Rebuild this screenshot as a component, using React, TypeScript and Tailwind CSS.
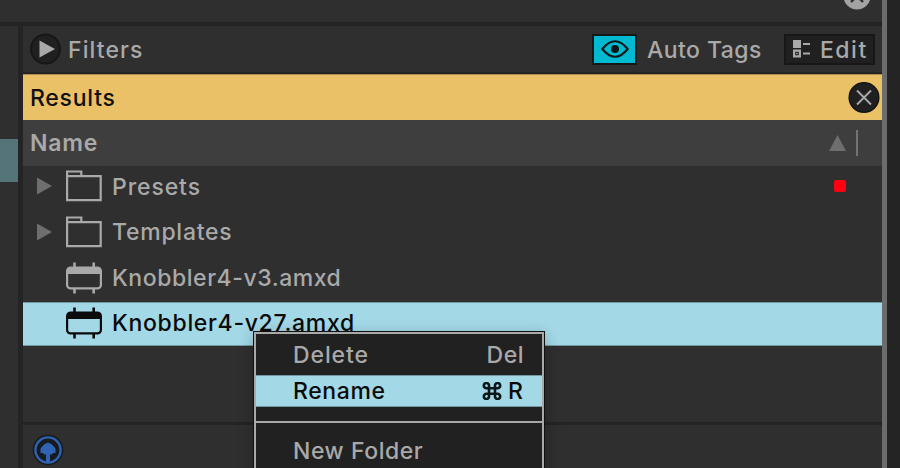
import React from "react";

const FOLDER = "#a9a9a9";

function FolderIcon() {
  return (
    <svg width="38" height="32" viewBox="0 0 38 32" fill="none" stroke={FOLDER} strokeWidth="2.2">
      <path d="M2.1 6.2H35.7V30.2H2.1Z" />
      <path d="M2.1 6V1.5H16.3V6" />
    </svg>
  );
}

function DeviceIcon({ color }: { color: string }) {
  return (
    <svg width="38" height="32" viewBox="0 0 38 32" fill="none" stroke={color} strokeWidth="2.2">
      <rect x="2.1" y="5.6" width="33.8" height="20.8" rx="3.5" />
      <path d="M2 12V9Q2 5.5 5.5 5.5H32.5Q36 5.5 36 9V12Z" fill={color} stroke="none" />
      <path d="M9.5 0.5V6M28.7 0.5V6M9.5 26V31.5M28.7 26V31.5" strokeWidth="2.6" />
    </svg>
  );
}

function Disclosure() {
  return (
    <svg width="16" height="18" viewBox="0 0 16 18" fill="#6e6e6e">
      <path d="M0 0.5L15 9L0 17.5Z" />
    </svg>
  );
}

function Row({ name, folder, selected, tagged, className, textClass }: { name: string; folder?: boolean; selected?: boolean; tagged?: boolean; className: string; textClass: string }) {
  return (
    <div className={`flex shrink-0 items-center pl-[14px] ${className}`}>
      <div className="w-[28px]">{folder && <Disclosure />}</div>
      {folder ? <FolderIcon /> : <DeviceIcon color={selected ? "#0b0b0b" : FOLDER} />}
      <span className={`ml-[9px] ${textClass}`}>{name}</span>
      {tagged && <span className="mr-[36px] ml-auto size-[12px] rounded-[2px] bg-[#ff0010]" />}
    </div>
  );
}

export default function App() {
  return (
    <div className="relative flex h-[468px] w-[900px] overflow-hidden bg-[#242424] font-['Inter',sans-serif] text-[23px] leading-none font-medium whitespace-nowrap text-[#a9a9a9]">
      <div className="flex w-[882px] flex-col">
        <div className="relative h-[22px] shrink-0 bg-[#2f2f2f]">
          <svg className="absolute top-[-18px] left-[843px]" width="28" height="28" viewBox="0 0 28 28">
            <circle cx="14" cy="14" r="13.6" fill="#a3a3a3" />
            <path d="M8 8L20 20M20 8L8 20" stroke="#2f2f2f" strokeWidth="2.4" />
          </svg>
        </div>
        <div className="mt-[4px] flex flex-1 gap-[5px]">
          <div className="w-[18px] bg-[#2f2f2f] pt-[113px]">
            <div className="h-[43px] bg-[#557479]" />
          </div>
          <div className="flex flex-1 flex-col">
            <div className="flex h-[46px] shrink-0 items-center bg-[#2f2f2f] pl-[7px]">
              <svg width="31" height="32" viewBox="0 0 31 32">
                <circle cx="15.5" cy="16" r="14.5" fill="#202020" stroke="#171717" strokeWidth="2" />
                <path d="M9.5 7.5L25 16L9.5 24.5Z" fill="#a9a9a9" />
              </svg>
              <span className="ml-[7px] pt-[2px] tracking-[1.1px]">Filters</span>
              <div className="ml-auto flex h-[31px] w-[45px] items-center justify-center border-2 border-[#171717] bg-[#00bad1]">
                <svg width="28" height="18" viewBox="0 0 28 18" fill="none" stroke="#0b1719" strokeWidth="2.1">
                  <path d="M1.3 9C6 3.2 10 1.2 14 1.2S22 3.2 26.7 9C22 14.8 18 16.8 14 16.8S6 14.8 1.3 9Z" />
                  <circle cx="14" cy="9" r="4" fill="#0b1719" stroke="none" />
                </svg>
              </div>
              <span className="ml-[10px] w-[115px] pt-[2px] tracking-[0.45px]">Auto Tags</span>
              <div className="mr-[7px] ml-[22px] flex h-[31px] w-[91px] items-center border-2 border-[#171717] bg-[#202020] pl-[7px]">
                <svg width="17" height="18" viewBox="0 0 17 18" fill="#a9a9a9">
                  <path d="M0 0H8V8H0ZM10 3H17V5H10ZM10 12.5H17V14.5H10Z" />
                  <path d="M0 9.5H8V17.5H0ZM2.2 11.7V15.3H5.8V11.7Z" fillRule="evenodd" />
                  <rect x="3.3" y="12.8" width="1.4" height="1.4" />
                </svg>
                <span className="ml-[10px] pt-[2px] tracking-[1.5px]">Edit</span>
              </div>
            </div>
            <div className="mt-[2px] flex h-[46px] shrink-0 items-center border-t border-[#a98d54] bg-[#eac167] pl-[7px] text-[#101010]">
              <span className="pt-[2px] tracking-[0.75px]">Results</span>
              <svg className="mr-[2px] ml-auto" width="32" height="32" viewBox="0 0 32 32">
                <circle cx="16" cy="15.5" r="14.8" fill="#202020" stroke="#151515" strokeWidth="1.5" />
                <path d="M9 8.5L23 22.5M23 8.5L9 22.5" stroke="#a9a9a9" strokeWidth="2" />
              </svg>
            </div>
            <div className="flex h-[46px] shrink-0 items-center bg-[#3e3e3e] pl-[7px] font-semibold">
              <span className="tracking-[0.8px]">Name</span>
              <svg className="ml-auto" width="17" height="16" viewBox="0 0 17 16" fill="#6e6e6e">
                <path d="M8.5 0L17 16H0Z" />
              </svg>
              <div className="mr-[24px] ml-[10px] h-[26px] w-[2px] bg-[#737373]" />
            </div>
            <div className="flex h-[256px] shrink-0 flex-col bg-[#2f2f2f]">
              <Row name="Presets" folder tagged className="h-[40px]" textClass="pt-[2px] tracking-[0.9px]" />
              <Row name="Templates" folder className="mt-[4px] h-[44px]" textClass="tracking-[0.75px]" />
              <Row name="Knobbler4-v3.amxd" className="mt-[2px] h-[44px]" textClass="tracking-[0.55px]" />
              <Row name="Knobbler4-v27.amxd" selected className="mt-[2px] h-[44px] border-y border-[#7498a2] bg-[#a3d8e6] pb-[3px] text-[#0b0b0b]" textClass="pt-[2px] tracking-[0.68px]" />
            </div>
            <div className="mt-[3px] flex-1 bg-[#2f2f2f] pt-[9px] pl-[9px]">
              <svg width="32" height="32" viewBox="0 0 32 32">
                <circle cx="16" cy="16" r="15.3" fill="#171b20" />
                <circle cx="16" cy="16" r="12.6" fill="none" stroke="#2f64b5" strokeWidth="2.3" />
                <path d="M14 28V20.5H12L11 19H8.5V14.5L12 10.5L16 8.5L20 10.5L23.5 14.5V19H21L20 20.5H18V28Z" fill="#2f64b5" />
              </svg>
            </div>
          </div>
        </div>
      </div>
      <div className="w-[5px] bg-[#6c6c6c]" />

      <div className="absolute top-[331px] left-[253px] h-[180px] w-[292px] border border-[#101010] shadow-[0_4px_14px_rgba(0,0,0,0.25)]">
        <div className="flex h-full flex-col border-2 border-[#a9a9a9] bg-[#212121]">
          <div className="flex h-[41px] shrink-0 items-center justify-between pt-[2px] pr-[18px] pl-[37px]">
            <span className="tracking-[0.9px]">Delete</span>
            <span className="tracking-[0.5px]">Del</span>
          </div>
          <div className="flex h-[32px] shrink-0 items-center justify-between border-y border-[#7498a2] bg-[#a3d8e6] pr-[19px] pl-[37px] text-[#0b0b0b]">
            <span className="tracking-[0.6px]">Rename</span>
            <span className="flex items-center gap-[6px]">
              <svg width="20" height="18" viewBox="0 0 20 18" fill="none" stroke="#0b1719" strokeWidth="2.6">
                <path d="M7 6.2V4A2.6 2.6 0 1 0 4.4 6.2H15.6A2.6 2.6 0 1 0 13 4V14A2.6 2.6 0 1 0 15.6 11.8H4.4A2.6 2.6 0 1 0 7 14Z" />
              </svg>
              <span>R</span>
            </span>
          </div>
          <div className="mt-[14px] h-[2px] shrink-0 bg-[#a9a9a9]" />
          <div className="flex h-[56px] shrink-0 items-center pl-[37px]">
            <span className="tracking-[0.55px]">New Folder</span>
          </div>
        </div>
      </div>
    </div>
  );
}
